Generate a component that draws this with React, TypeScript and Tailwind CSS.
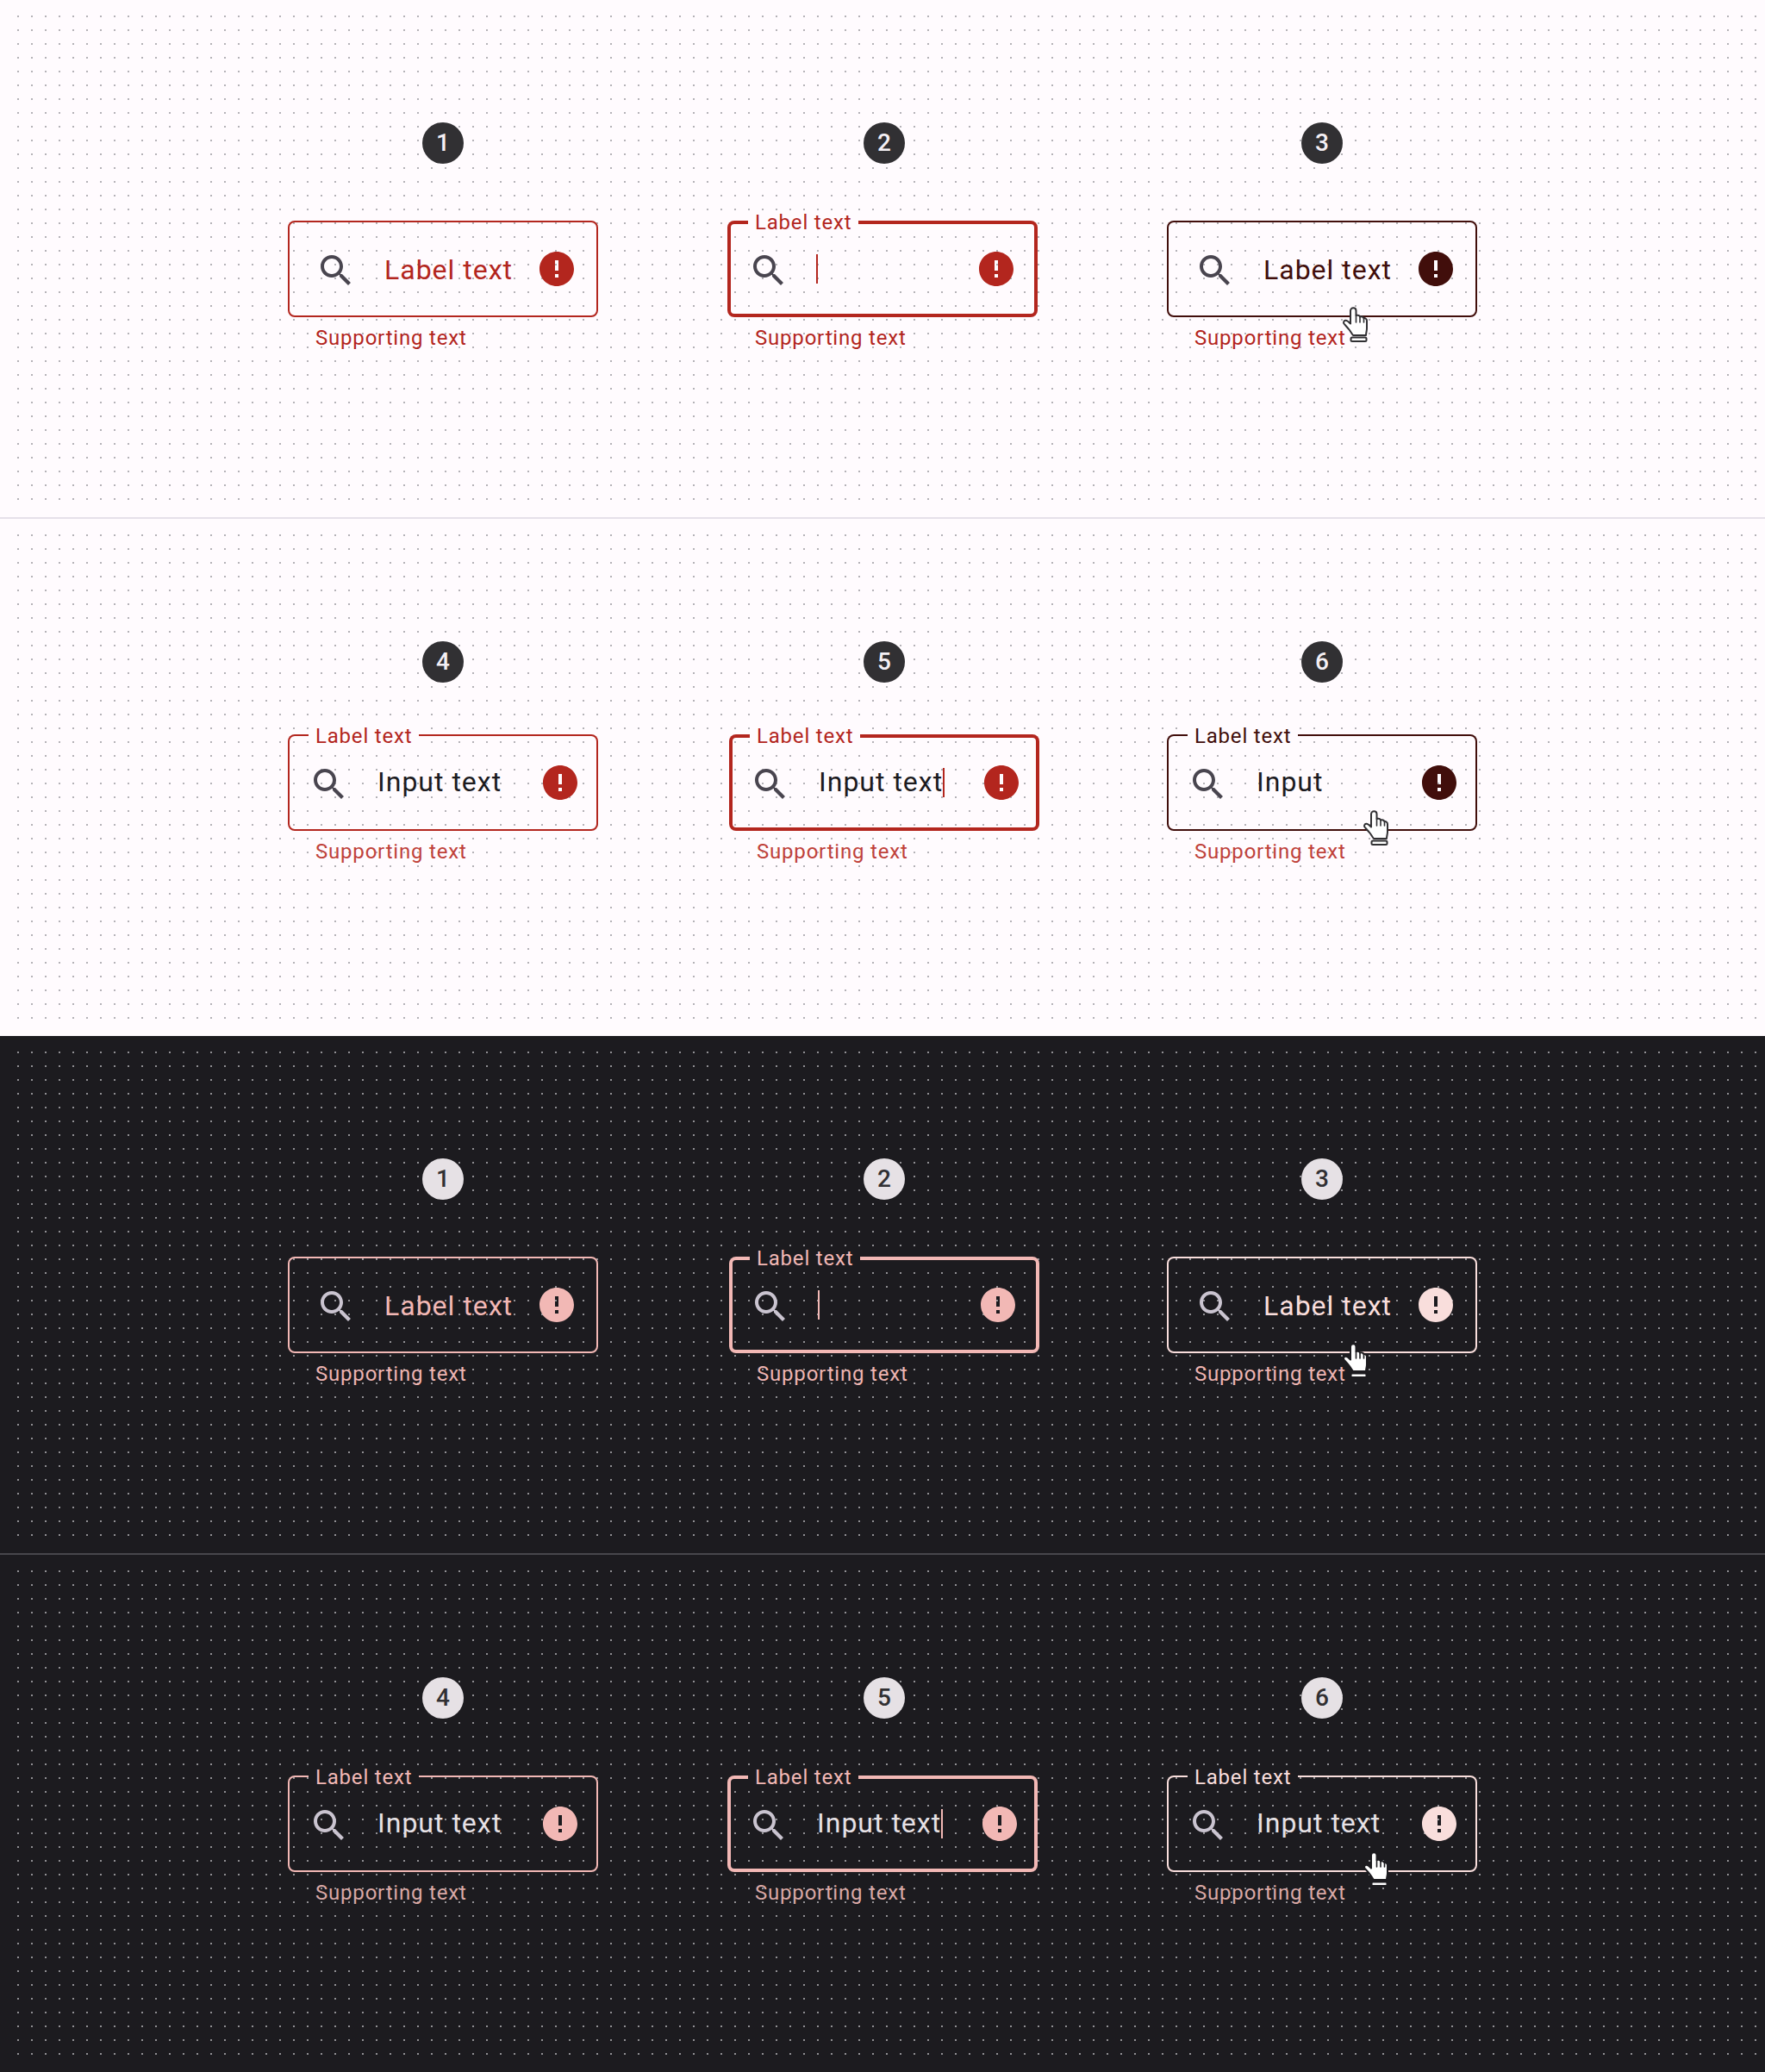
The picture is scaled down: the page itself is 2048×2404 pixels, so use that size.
import React from "react";

type Mode = "light" | "dark";
type Cell = {
  n: number;
  floating: boolean;
  focus?: boolean;
  hover?: boolean;
  value?: string;
  caret?: boolean;
  shiftLeft?: boolean;
  wideIcon?: boolean;
  cursor?: "a" | "b";
};

const SEARCH =
  "M15.5 14h-.79l-.28-.27C15.41 12.59 16 11.11 16 9.5 16 5.91 13.09 3 9.5 3S3 5.91 3 9.5 5.91 16 9.5 16c1.61 0 3.09-.59 4.23-1.57l.27.28v.79l5 4.99L20.49 19l-4.99-5zm-6 0C7.01 14 5 11.99 5 9.5S7.01 5 9.5 5 14 7.01 14 9.5 11.99 14 9.5 14z";
const ERROR =
  "M12 2C6.48 2 2 6.48 2 12s4.48 10 10 10 10-4.48 10-10S17.52 2 12 2zm1 15h-2v-2h2v2zm0-4h-2V7h2v6z";

function Hand({ dark, place }: { dark: boolean; place: string }) {
  const line = dark ? "#1C1B1F" : "#313033";
  return (
    <svg viewBox="0 0 29 41" className={`absolute z-10 h-[41px] w-[29px] ${place}`}>
      <path
        d="M9 4.5C9 2.5 10.5 1.2 12.3 1.2C14.1 1.2 15.5 2.5 15.5 4.5V10C17.5 9.2 19.5 10 20 11.5C22 10.8 24 11.5 24.5 13.2C26 12.8 28 14 28 16V25C28 28 27 30 27 33H12C10.5 31 9 28.5 7.5 26.5C5.5 24 3 21.5 1.5 19.5C.5 18 1.5 16 3.2 15.8C5 15.6 7.5 18 9 19.5Z"
        fill="#FFFFFF"
        stroke={line}
        strokeWidth="2"
        strokeLinejoin="round"
      />
      <path d="M15.5 10V18M20 11.5V18M24.5 13.2V18" fill="none" stroke={line} strokeWidth="1.6" strokeLinecap="round" />
      <rect x="9.5" y="35.5" width="18" height="4.5" rx="1.5" fill="#FFFFFF" stroke={line} strokeWidth="2" />
    </svg>
  );
}

function Field({ cell, mode, top }: { cell: Cell; mode: Mode; top: string }) {
  const dark = mode === "dark";
  const hover = !!cell.hover;
  const ring = dark
    ? hover
      ? "ring-[#F9DEDC]"
      : "ring-[#F2B8B5]"
    : hover
      ? "ring-[#410E0B]"
      : "ring-[#B3261E]";
  const accentText = dark
    ? hover
      ? "text-[#F9DEDC]"
      : "text-[#F2B8B5]"
    : hover
      ? "text-[#410E0B]"
      : "text-[#B3261E]";
  const valueText = dark ? "text-[#E6E1E5]" : "text-[#1C1B1F]";
  const iconText = dark ? "text-[#CAC4D0]" : "text-[#49454F]";
  const pageBg = dark ? "bg-[#1C1B1F]" : "bg-[#FFFBFE]";
  const caretBg = dark ? "bg-[#F2B8B5]" : "bg-[#B3261E]";
  const filled = cell.value !== undefined;
  const supporting = filled
    ? dark
      ? "text-[#D9A8A5]"
      : "text-[#BF423B]"
    : dark
      ? "text-[#EDB4B1]"
      : "text-[#B3261E]";

  return (
    <div className="flex w-[360px] shrink-0 flex-col">
      <div
        className={`flex h-[48px] w-[48px] items-center justify-center self-center rounded-full text-[28px] font-medium leading-none ${
          dark ? "bg-[#E6E1E5] text-[#313033]" : "bg-[#313033] text-[#F4EFF4]"
        }`}
      >
        {cell.n}
      </div>
      <div className={`${top} ${cell.shiftLeft ? "-ml-[2px]" : ""} w-[360px]`}>
        <div className={`relative flex h-[112px] w-[360px] items-center rounded-lg ring-inset ${cell.focus ? "ring-4" : "ring-2"} ${ring}`}>
          {cell.floating && (
            <span className={`absolute -top-[10px] left-[24px] h-[24px] w-[128px] px-2 text-[24px] leading-[24px] tracking-[0.8px] whitespace-nowrap ${pageBg} ${accentText}`}>
              Label text
            </span>
          )}
          <svg
            viewBox="0 0 24 24"
            fill="currentColor"
            className={`mt-[4px] h-[48px] w-[48px] shrink-0 ${cell.wideIcon ? "ml-[32px]" : "ml-[24px]"} ${iconText}`}
          >
            <path d={SEARCH} />
          </svg>
          {!cell.floating && (
            <span className={`ml-[32px] mt-[2px] text-[32px] leading-[48px] tracking-[1px] whitespace-nowrap ${accentText}`}>Label text</span>
          )}
          {filled && <span className={`ml-[32px] -mt-[2px] text-[32px] leading-[48px] tracking-[1px] whitespace-nowrap ${valueText}`}>{cell.value}</span>}
          {cell.caret && <span className={`h-[34px] w-[2px] shrink-0 ${caretBg} ${filled ? "" : "ml-[31px]"}`} />}
          <svg
            viewBox="0 0 24 24"
            fill="currentColor"
            className={`ml-auto h-[48px] w-[48px] shrink-0 ${filled ? "mr-[20px]" : "mr-[24px]"} ${accentText}`}
          >
            <path d={ERROR} fillRule="evenodd" />
          </svg>
          {cell.cursor === "a" && <Hand dark={dark} place="left-[204px] top-[100px]" />}
          {cell.cursor === "b" && <Hand dark={dark} place="left-[228px] top-[88px]" />}
        </div>
        <div className={`ml-[32px] mt-2 text-[24px] leading-[32px] tracking-[0.8px] ${supporting}`}>Supporting text</div>
      </div>
    </div>
  );
}

function Row({ mode, cells, top }: { mode: Mode; cells: Cell[]; top: string }) {
  const dark = mode === "dark";
  return (
    <section className={`h-[600px] pt-[18px] pr-[10px] pb-[20px] pl-[20px] ${dark ? "bg-[#1C1B1F]" : "bg-[#FFFBFE]"}`}>
      <div
        className={`flex h-[562px] items-start pt-[124px] pl-[314px] bg-[length:16px_16px] ${
          dark
            ? "bg-[radial-gradient(circle_at_1px_1px,#908F93_1px,transparent_0)]"
            : "bg-[radial-gradient(circle_at_1px_1px,#B4B2B7_1px,transparent_0)]"
        }`}
      >
        <Field cell={cells[0]} mode={mode} top={top} />
        <div className="ml-[152px]">
          <Field cell={cells[1]} mode={mode} top={top} />
        </div>
        <div className="ml-[148px]">
          <Field cell={cells[2]} mode={mode} top={top} />
        </div>
      </div>
    </section>
  );
}

const rowA: Cell[] = [
  { n: 1, floating: false, wideIcon: true },
  { n: 2, floating: true, focus: true, caret: true, shiftLeft: true },
  { n: 3, floating: false, hover: true, wideIcon: true, cursor: "a" },
];
const rowB: Cell[] = [
  { n: 4, floating: true, value: "Input text" },
  { n: 5, floating: true, focus: true, value: "Input text", caret: true },
  { n: 6, floating: true, hover: true, value: "Input", cursor: "b" },
];
const rowC: Cell[] = [
  { n: 1, floating: false, wideIcon: true },
  { n: 2, floating: true, focus: true, caret: true },
  { n: 3, floating: false, hover: true, wideIcon: true, cursor: "a" },
];
const rowD: Cell[] = [
  { n: 4, floating: true, value: "Input text" },
  { n: 5, floating: true, focus: true, value: "Input text", caret: true, shiftLeft: true },
  { n: 6, floating: true, hover: true, value: "Input text", cursor: "b" },
];

export default function App() {
  return (
    <div className="w-[2048px] font-['Roboto',sans-serif]">
      <Row mode="light" cells={rowA} top="mt-[66px]" />
      <div className="h-[2px] bg-[#E6E1EA]" />
      <Row mode="light" cells={rowB} top="mt-[60px]" />
      <Row mode="dark" cells={rowC} top="mt-[66px]" />
      <div className="h-[2px] bg-[#48464C]" />
      <Row mode="dark" cells={rowD} top="mt-[66px]" />
    </div>
  );
}
